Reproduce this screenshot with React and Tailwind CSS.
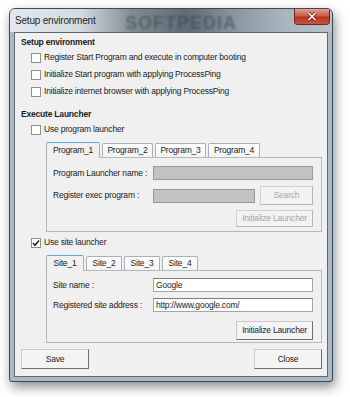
import React from "react";

const font = { fontFamily: '"Liberation Sans", Arial, sans-serif' };
const txt = "whitespace-nowrap text-[8.5px] tracking-[-0.2px] text-[#1b1b1b]";

function Check({ checked, label }) {
  return (
    <div className="flex h-[17px] items-center pl-[16px]">
      <span className="flex h-[10px] w-[10px] items-center justify-center border border-[#8e8f8f] bg-white">
        {checked ? (
          <svg width="8" height="8" viewBox="0 0 8 8">
            <path d="M1 4 L3 6.2 L7 1.5" fill="none" stroke="#222" strokeWidth="1.6" />
          </svg>
        ) : null}
      </span>
      <span className={"ml-[2px] pl-[1px] " + txt}>{label}</span>
    </div>
  );
}

function Tabs({ items }) {
  return (
    <div className="ml-[31px] flex h-[15px] items-end gap-[2px]">
      {items.map((t, i) =>
        i === 0 ? (
          <div
            key={t.label}
            style={{ width: t.w }}
            className={"relative z-10 -mb-px flex h-[16px] items-center justify-center rounded-t-[2px] border border-b-0 border-[#a9b0b8] border-t-[#5fa6de] bg-[#f0f0f0] " + txt}
          >
            {t.label}
          </div>
        ) : (
          <div
            key={t.label}
            style={{ width: t.w }}
            className={"flex h-[14px] items-center justify-center rounded-t-[2px] border border-b-0 border-[#a9b0b8] bg-gradient-to-b from-[#ffffff] to-[#f3f3f3] " + txt}
          >
            {t.label}
          </div>
        )
      )}
    </div>
  );
}

function Btn({ children, disabled, className = "" }) {
  return (
    <div
      className={
        "flex items-center justify-center whitespace-nowrap border text-[8.5px] tracking-[-0.2px] " +
        (disabled
          ? "border-[#d0d0d0] border-r-[#b5b5b5] border-b-[#b5b5b5] bg-[#f2f2f2] text-[#a6a6a6] "
          : "border-[#c9c9c9] border-r-[#6f6f6f] border-b-[#6f6f6f] bg-[#f4f4f4] text-[#1b1b1b] ") +
        className
      }
    >
      {children}
    </div>
  );
}

export default function App() {
  return (
    <div style={font} className="h-[397px] w-[350px] overflow-hidden bg-white pl-[9px] pt-[8px]">
      <div className="flex h-[374px] w-[324px] flex-col rounded-t-[6px] rounded-b-[3px] border border-[#3c4a54] bg-[#a9bac6] shadow-[2px_5px_12px_rgba(0,0,0,0.45)]">
        {/* Title bar */}
        <div className="flex h-[23px] items-start justify-between overflow-hidden rounded-t-[5px] bg-[linear-gradient(90deg,#e2e8ed_0%,#d3dbe1_22%,#7f8b94_38%,#5f6b74_55%,#8a96a0_70%,#a9b5be_85%,#b7c2ca_100%)] pl-[5px]">
          <div className="relative flex h-[23px] items-center">
            <span className="text-[10px] tracking-[-0.2px] text-[#1f1f1f]">Setup environment</span>
            <span className="absolute left-[110px] top-[1px] text-[18px] font-bold tracking-[1px] text-[#2f3a42] opacity-45 blur-[1px]">
              SOFTPEDIA
            </span>
          </div>
          <div className="mr-[2px] flex h-[16px] w-[36px] items-center justify-center rounded-b-[4px] border border-t-0 border-[#6b2a22] bg-[linear-gradient(180deg,#e3a095_0%,#cf5a48_45%,#b8321f_55%,#c9543e_100%)]">
            <svg width="10" height="9" viewBox="0 0 10 9">
              <path d="M1.5 1 L8.5 8 M8.5 1 L1.5 8" stroke="#5a1a12" strokeWidth="3" />
              <path d="M1.5 1 L8.5 8 M8.5 1 L1.5 8" stroke="#ffffff" strokeWidth="1.6" />
            </svg>
          </div>
        </div>

        {/* Client area */}
        <div className="mx-[4px] mb-[4px] flex flex-1 flex-col border border-[#5b6a74] bg-[#f0f0f0] pt-[3px]">
          <div className={"flex h-[13px] items-center pl-[6px] font-bold " + txt}>Setup environment</div>
          <Check label="Register Start Program and execute in computer booting" />
          <Check label="Initialize Start program with applying ProcessPing" />
          <Check label="Initialize internet browser with applying ProcessPing" />

          <div className={"mt-[8px] flex h-[13px] items-center pl-[6px] font-bold " + txt}>Execute Launcher</div>
          <Check label="Use program launcher" />

          <div className="mt-[4px]">
            <Tabs
              items={[
                { label: "Program_1", w: 54 },
                { label: "Program_2", w: 51 },
                { label: "Program_3", w: 51 },
                { label: "Program_4", w: 52 },
              ]}
            />
            <div className={"ml-[31px] mr-[5px] h-[75px] border border-[#b4b9bf] bg-[#f0f0f0] pl-[6px] pr-[8px] pt-[8px] " + txt}>
              <div className="flex h-[14px] items-center">
                <span className="w-[100px]">Program Launcher name :</span>
                <div className="h-[14px] flex-1 border border-[#9a9a9a] bg-[#c2c2c2]" />
              </div>
              <div className="mt-[6px] flex h-[19px] items-center">
                <span className="w-[100px]">Register exec program :</span>
                <div className="h-[14px] w-[102px] border border-[#9a9a9a] bg-[#c2c2c2]" />
                <Btn disabled className="ml-[5px] h-[19px] flex-1">Search</Btn>
              </div>
              <div className="mt-[5px] flex justify-end">
                <Btn disabled className="h-[17px] w-[77px]">Initialize Launcher</Btn>
              </div>
            </div>
          </div>

          <div className="mt-[2px]">
            <Check checked label="Use site launcher" />
          </div>

          <div className="mt-[4px]">
            <Tabs
              items={[
                { label: "Site_1", w: 38 },
                { label: "Site_2", w: 36 },
                { label: "Site_3", w: 36 },
                { label: "Site_4", w: 36 },
              ]}
            />
            <div className={"ml-[31px] mr-[5px] h-[73px] border border-[#b4b9bf] bg-[#f0f0f0] pl-[6px] pr-[8px] pt-[7px] " + txt}>
              <div className="flex h-[14px] items-center">
                <span className="w-[100px]">Site name :</span>
                <div className="flex h-[14px] flex-1 items-center border border-[#a5a5a5] border-t-[#7d7d7d] bg-white pl-[2px]">Google</div>
              </div>
              <div className="mt-[6px] flex h-[14px] items-center">
                <span className="w-[100px]">Registered site address :</span>
                <div className="flex h-[14px] flex-1 items-center border border-[#a5a5a5] border-t-[#7d7d7d] bg-white pl-[2px]">http://www.google.com/</div>
              </div>
              <div className="mt-[9px] flex justify-end">
                <Btn className="h-[19px] w-[77px]">Initialize Launcher</Btn>
              </div>
            </div>
          </div>

          <div className="mt-[6px] flex justify-between pl-[6px] pr-[5px]">
            <Btn className="h-[20px] w-[68px]">Save</Btn>
            <Btn className="h-[20px] w-[68px]">Close</Btn>
          </div>
        </div>
      </div>
    </div>
  );
}
